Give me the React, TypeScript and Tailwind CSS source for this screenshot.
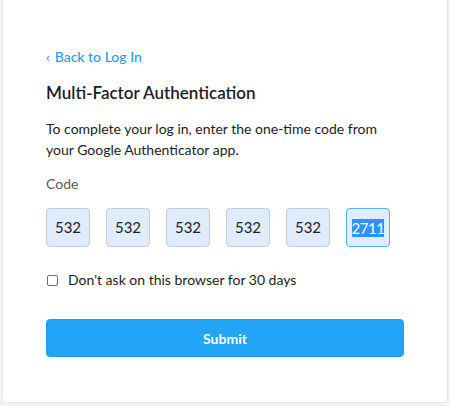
import React from "react";

export default function App() {
  const codes = ["532", "532", "532", "532", "532"];
  return (
    <div
      className="w-[450px] h-[406px] bg-[#f4f4f4] overflow-hidden"
      style={{ fontFamily: "Lato, 'Open Sans', sans-serif" }}
    >
      <div className="ml-[2px] w-[446px] h-[403px] bg-white border-x border-b border-[#e6e6e6] rounded-b-[5px] pl-[43px] pr-[43px] pt-[47px]">
        <div className="flex items-center gap-[5px] text-[14px] leading-[20px] text-[#2d9cf0] font-medium">
          <span className="text-[13px]">‹</span>
          <span>Back to Log In</span>
        </div>
        <div className="mt-[14px] text-[17px] leading-[24px] font-semibold text-[#1c1c28]">
          Multi-Factor Authentication
        </div>
        <p className="mt-[13px] text-[14px] leading-[21px] text-[#1c1c28]">
          To complete your log in, enter the one-time code from
          <br />
          your Google Authenticator app.
        </p>
        <div className="mt-[14px] text-[14px] leading-[20px] text-[#555a60]">Code</div>
        <div className="mt-[14px] flex gap-[16px]">
          {codes.map((c, i) => (
            <div
              key={i}
              className="w-[44px] h-[39px] rounded-[4px] bg-[#deecfd] border border-[#c3cbd6] flex items-center justify-center text-[15px] text-[#1c1c28]"
            >
              {c}
            </div>
          ))}
          <div className="w-[44px] h-[39px] rounded-[4px] bg-[#deecfd] border border-[#55b3f3] flex items-center justify-center text-[15px]">
            <span className="bg-[#3390ff] text-white leading-[18px] tracking-[-0.5px]">2711</span>
          </div>
        </div>
        <div className="mt-[23px] flex items-center h-[20px]">
          <div className="ml-[1px] w-[11px] h-[11px] rounded-[2px] border border-[#6b6f75] bg-white" />
          <span className="ml-[10px] text-[14px] leading-[20px] text-[#1c1c28]">
            Don't ask on this browser for 30 days
          </span>
        </div>
        <button className="mt-[29px] w-full h-[38px] rounded-[4px] bg-[#22a5f7] border border-[#1e9ef0] text-white text-[14px] font-bold flex items-center justify-center">
          Submit
        </button>
      </div>
    </div>
  );
}
